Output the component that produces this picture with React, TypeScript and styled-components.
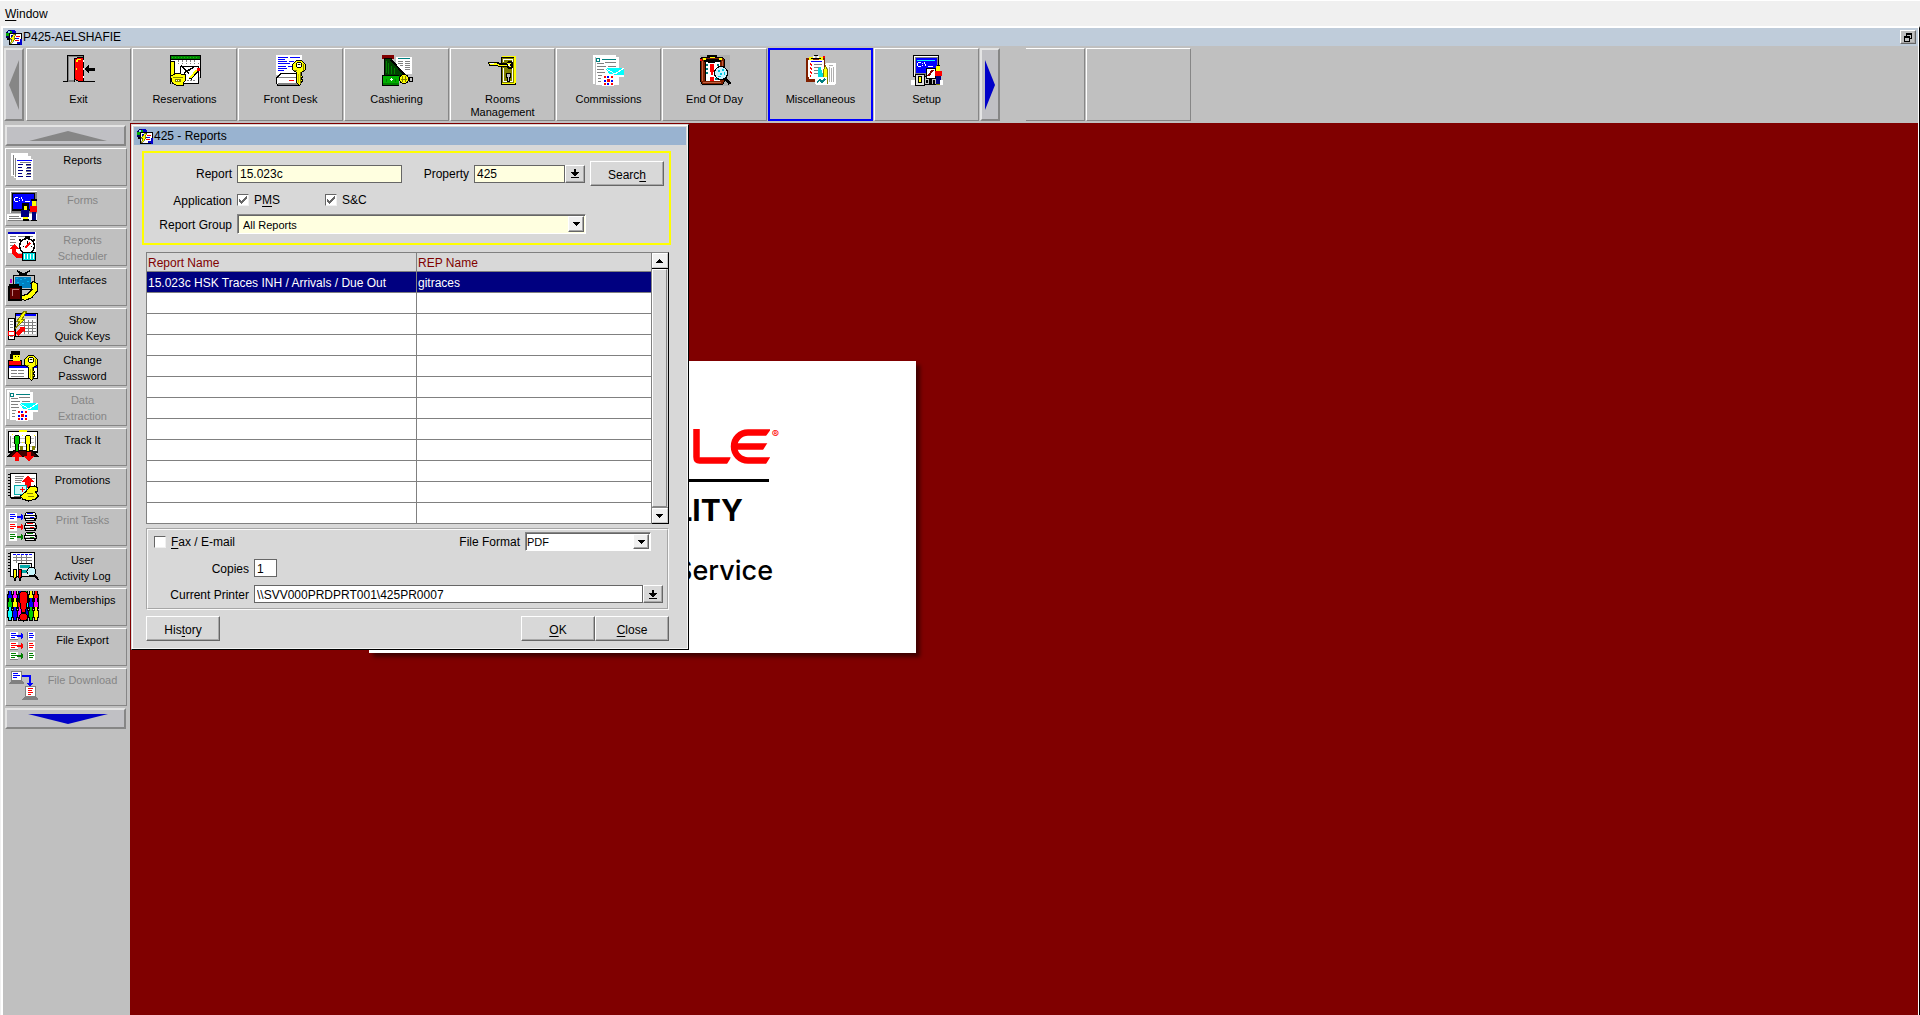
import React from "react";
import styled, { createGlobalStyle, css } from "styled-components";

const color = {
  face: "#c0c0c0",
  panel: "#d8d8d8",
  shade: "#868686",
  edge: "#666666",
  maroon: "#800000",
  navy: "#000080",
  cream: "#ffffe0",
};

const GlobalStyle = createGlobalStyle`
  *, *::before, *::after { box-sizing: border-box; }
  body { margin: 0; background: #f0f0f0; }
  body, button, input, select, table {
    font-family: "Liberation Sans", Arial, sans-serif;
    font-size: 12px;
    color: #000;
  }
  u { text-underline-offset: 2px; }
`;

const raised = css`
  border: 1px solid;
  border-color: #fff ${color.edge} ${color.edge} #fff;
  box-shadow: inset -1px -1px 0 #a8a8a8;
`;

/* ---------- pixel drawings ---------- */

// Each "x,y,w,h" group becomes one filled block.
function Px({ c, r }: { c: string; r: string }) {
  const d = r
    .split(" ")
    .map((b) => {
      const [x, y, w, h] = b.split(",");
      return `M${x} ${y}h${w}v${h}h-${w}z`;
    })
    .join("");
  return <path fill={c} d={d} />;
}

const Art = styled.svg.attrs({ shapeRendering: "crispEdges", "aria-hidden": true })<{ $size?: number }>`
  display: block;
  flex: none;
  width: ${(p) => p.$size ?? 32}px;
  height: ${(p) => p.$size ?? 32}px;
`;

const Icon = ({ children }: { children: React.ReactNode }) => <Art viewBox="0 0 32 32">{children}</Art>;

const KeyShape = () => (
  <g>
    <path
      fill="#ff0"
      stroke="#000"
      strokeWidth="1"
      d="M21.500 5.500h5l4 4v5l-4 3v3l1 1-1 2 1 2-1 2-2 3-3-3v-10l-4-3v-5z"
    />
    <Px c="#808000" r="25,17,1,12 28,9,1,7 19,15,3,1" />
    <Px c="#000" r="22,7,4,1 21,8,1,4 26,8,1,4 22,12,4,1 23,9,2,1" />
    <Px c="#fff" r="22,10,4,2 22,8,4,1" />
    <Px c="#c0c000" r="23,19,1,9" />
  </g>
);

const ExitIcon = () => (
  <Icon>
    <Px c="#808080" r="5,1,1,26 6,1,15,1 6,25,6,2" />
    <Px c="#000" r="4,0,1,27 4,0,17,1 0,26,5,1 20,26,12,1 11,3,1,24 20,1,1,4" />
    <path fill="#f00" stroke="#000" strokeWidth="1" d="M11.5 4l4-1.5h5v24h-4l-5-2z" />
    <Px c="#ff0" r="14,4,4,1 13,5,2,2 13,13,1,2" />
    <Px c="#fff" r="20,5,1,2 20,13,1,2 20,21,1,2" />
    <path d="M21 14l5-4v3h6v3h-6v3z" />
  </Icon>
);

const ReservationsIcon = () => (
  <Icon>
    <Px c="#000" r="1,0,31,5 1,5,1,24 31,5,1,18 12,28,18,1" />
    <Px c="#008000" r="2,1,29,3" />
    <Px c="#00d000" r="3,2,1,1 6,2,1,1 9,2,1,1 12,2,1,1 15,2,1,1 18,2,1,1 21,2,1,1 24,2,1,1 27,2,1,1" />
    <Px c="#fff" r="2,5,29,17" />
    <Px c="#808080" r="9,8,1,1 13,8,1,1 17,8,1,1 21,8,1,1 25,8,1,1 29,8,1,1 9,5,1,2 13,5,1,2 17,5,1,2 21,5,1,2 25,5,1,2" />
    <Px c="#000" r="11,11,19,1 11,11,1,8 29,11,1,17" />
    <Px c="#fff" r="12,12,17,16" />
    <Px c="#808080" r="18,25,2,1 21,25,2,1 24,25,2,1 14,13,2,1 22,13,2,1" />
    <path d="M12 11l8 7M15 18l10-6" stroke="#000" strokeWidth="1.5" fill="none" />
    <path d="M21 24l7-8" stroke="#000" strokeWidth="3" />
    <path d="M21 23l7-8" stroke="#ff0" strokeWidth="2" />
    <Px c="#f00" r="28,13,3,3" />
    <path fill="#ff0" stroke="#000" d="M1.5 6.5h4v13l-2 2-2-2z" />
    <path fill="#ff0" stroke="#000" d="M1.5 21.5l5-3 10 1v6l-2 2v3h-6l-5-2z" />
    <Px c="#808000" r="4,22,10,1 6,24,6,3" />
    <Px c="#fff" r="7,25,1,1 9,25,1,1" />
  </Icon>
);

const FrontDeskIcon = () => (
  <Icon>
    <Px c="#fff" r="1,0,26,20" />
    <Px c="#00f" r="3,2,10,1 15,2,10,1 3,4,7,1 3,6,9,1 3,8,12,1 3,11,8,1 3,13,9,1 3,15,6,1 14,6,5,1 13,11,5,1" />
    <path fill="#fff" stroke="#000" d="M6 18.500h15l4 4v5l-2 3h-20l-2-3v-4z" />
    <Px c="#808080" r="3,22,20,1 3,28,20,2" />
    <Px c="#f00" r="14,25,5,1" />
    <KeyShape />
  </Icon>
);

const CashieringIcon = () => (
  <Icon>
    <Px c="#fff" r="15,2,16,17" />
    <Px c="#008080" r="17,3,12,1" />
    <Px c="#808080" r="17,6,5,1 17,8,5,1 24,6,5,1 24,8,5,1 24,10,5,1 24,12,5,1 24,14,5,1 19,10,3,1" />
    <Px c="#800000" r="1,0,12,4" />
    <Px c="#000" r="3,3,8,17" />
    <path fill="#004000" d="M4 4h6l12 13v5h-18z" />
    <path d="M10 5l13 14" stroke="#000" strokeWidth="2" />
    <Px c="#008000" r="5,6,1,12 7,8,1,11 10,11,1,8 13,13,1,6" />
    <Px c="#000" r="1,20,17,11" />
    <Px c="#00b000" r="2,21,16,8" />
    <Px c="#008000" r="2,28,16,2 5,24,1,3 14,24,1,3" />
    <Px c="#fff" r="9,24,3,1 10,23,1,3" />
    <circle cx="23" cy="24" r="4.500" fill="#ff0" stroke="#000" />
    <Px c="#808000" r="21,21,1,6 24,21,1,6 20,24,6,1" />
    <path fill="#c0c0c0" stroke="#000" d="M28 22.500h3v4h-3z" />
  </Icon>
);

const RoomsIcon = () => (
  <Icon>
    <Px c="#000" r="14,2,15,28" />
    <Px c="#808000" r="15,3,12,26" />
    <Px c="#ff0" r="15,1,14,1 27,2,2,26 15,28,13,1" />
    <Px c="#fff" r="16,4,10,1 25,5,1,21 16,26,10,1 16,4,1,3 16,13,1,13" />
    <path fill="#000" d="M1 7h9l3 1h7l1-2h3l2 2v4l-2 2h-3l-2-2h-7l-3-1h-7z" />
    <Px c="#ff0" r="2,8,8,1 3,9,9,1 11,10,9,1 20,8,4,1 22,11,2,1" />
    <Px c="#fff" r="3,8,4,1 21,9,2,2" />
    <Px c="#000" r="19,18,5,5 20,22,3,5" />
    <Px c="#c0c0c0" r="20,19,3,3 21,22,1,4" />
  </Icon>
);

const MailReportIcon = () => (
  <Icon>
    <Px c="#fff" r="0,0,23,2 0,0,2,29 3,2,23,28" />
    <Px c="#008080" r="3,3,1,4 6,3,1,4 3,3,4,1 3,6,4,1 9,4,14,1" />
    <Px c="#808080" r="12,7,11,1 4,8,7,1 4,11,9,1 15,11,8,1 4,14,7,1 4,17,8,1 5,20,4,1 5,23,3,1 5,26,3,1" />
    <path fill="#0ff" d="M12 13h19v8h-13z" />
    <path d="M12 13l10 6 9-6" stroke="#fff" fill="none" />
    <Px c="#fff" r="20,20,11,2 9,19,12,12" />
    <Px c="#f00" r="11,21,2,2 18,21,2,2 14,24,3,3 11,28,2,2 18,28,2,2" />
    <Px c="#00f" r="14,21,2,2 11,25,2,2 18,25,2,2 14,28,2,2" />
  </Icon>
);

const EndOfDayIcon = () => (
  <Icon>
    <Px c="#b0b0b0" r="1,0,30,31" />
    <path fill="#802000" stroke="#000" d="M2.500 2.500h21l2 2v22l-2 3h-20l-2-3v-22z" />
    <Px c="#c06040" r="3,6,1,20 4,27,18,1 23,6,1,6" />
    <Px c="#000" r="8,0,10,3 5,4,17,3" />
    <Px c="#ff0" r="4,3,3,2 20,3,3,2 11,2,5,1" />
    <Px c="#f00" r="1,4,2,2" />
    <Px c="#fff" r="6,7,15,19" />
    <Px c="#000" r="6,7,1,19 9,7,7,1" />
    <Px c="#008080" r="7,9,2,2 7,13,2,2 7,17,2,2 18,9,2,2 16,23,4,2" />
    <Px c="#f00" r="11,9,4,8 12,17,2,3 11,22,4,4" />
    <circle cx="22" cy="18" r="6.500" fill="#c8f4ff" stroke="#000" />
    <Px c="#00c8e0" r="19,15,2,2 23,14,2,2 21,18,2,2 25,17,1,3 19,21,3,1" />
    <path d="M26 23l5 6" stroke="#000" strokeWidth="3" />
  </Icon>
);

const MiscIcon = () => (
  <Icon>
    <path fill="#fff" stroke="#802000" strokeWidth="2" d="M2 4h17v22h-17z" />
    <Px c="#802000" r="1,22,10,4" />
    <Px c="#ff0" r="4,2,4,3 14,2,4,3" />
    <Px c="#fff" r="4,5,15,19 8,1,2,3 12,1,2,3" />
    <Px c="#000" r="9,0,4,1 6,3,10,1" />
    <Px c="#00f" r="6,6,11,1" />
    <Px c="#808080" r="9,9,8,1 9,12,7,1 9,15,6,1 9,18,4,1" />
    <Px c="#f00" r="5,8,1,2 6,9,1,2 5,12,1,2 6,13,1,2 5,16,1,2 6,17,1,2 5,20,1,2 18,1,2,2" />
    <path fill="#fff" d="M20 9l2-1h8l1 1v19l-2 2h-8z" />
    <Px c="#b0b0b0" r="22,13,1,14 24,12,1,15 26,13,1,14 28,12,1,15 24,10,4,1" />
    <path fill="#0dd" d="M13 13l2-2 3 8v5h-5z" />
    <path fill="#ff0" stroke="#808000" d="M18.500 15l2-4 2 4v13h-4z" />
    <path fill="#fff" d="M10 22h12v7l-1 1h-10l-1-1z" />
    <path fill="none" stroke="#008080" strokeWidth="1.500" d="M12 27l3-2 2 2 3-3" />
  </Icon>
);

const SetupIcon = () => (
  <Icon>
    <Px c="#000" r="2,0,26,22" />
    <Px c="#fff" r="3,1,24,20" />
    <Px c="#808080" r="4,2,23,19" />
    <Px c="#00f" r="5,3,21,15" />
    <Px c="#0ff" r="6,5,18,1" />
    <Px c="#fff" r="7,7,3,1 6,8,1,3 7,11,3,1 11,8,1,1 11,10,1,1 13,7,1,2 14,9,1,2 17,11,5,1" />
    <path fill="#fff" stroke="#000" d="M15.500 13.500h9v10h-9z" />
    <path d="M17 21l5-6" stroke="#800000" strokeWidth="2" />
    <Px c="#ff0" r="25,11,4,5" />
    <Px c="#f00" r="24,16,7,5" />
    <Px c="#000080" r="25,21,5,8" />
    <Px c="#000" r="26,10,3,1 15,25,2,3 18,24,3,5 22,25,2,5 13,29,13,1" />
    <Px c="#808000" r="25,29,5,1" />
    <path fill="#e0e0e0" stroke="#000" d="M4.500 19.500h9v11h-9z" />
    <Px c="#000" r="7,21,4,7" />
    <Px c="#ff0" r="8,22,2,5" />
    <Px c="#fff" r="0,25,4,5 29,25,3,5" />
  </Icon>
);

const ReportsIcon = () => (
  <Icon>
    <Px c="#fff" r="4,3,17,23" />
    <Px c="#808080" r="6,5,1,20" />
    <Px c="#fff" r="7,6,17,22" />
    <Px c="#808080" r="8,8,1,19" />
    <Px c="#fff" r="9,9,17,21" />
    <Px c="#00f" r="10,10,15,1" />
    <Px c="#000080" r="11,14,5,1 11,17,4,1 11,20,5,1 11,23,4,1 11,26,5,1 19,14,5,1 20,17,4,1 19,20,5,1 20,23,4,1 19,26,5,1" />
    <Px c="#808080" r="13,12,11,1 19,15,5,1 19,18,5,1 19,21,5,1 19,24,5,1" />
  </Icon>
);

const FormsIcon = () => (
  <Icon>
    <Px c="#fff" r="3,1,27,22" />
    <Px c="#808080" r="4,2,26,21" />
    <Px c="#000" r="5,3,23,18" />
    <Px c="#00f" r="6,4,21,15" />
    <Px c="#fff" r="8,7,3,1 7,8,1,3 8,11,3,1 12,8,1,1 12,10,1,1 14,7,1,2 15,9,1,2 18,11,5,1" />
    <Px c="#fff" r="0,24,30,6" />
    <Px c="#808080" r="2,26,10,1 2,28,12,1 1,30,29,1" />
    <Px c="#000" r="15,13,7,8" />
    <Px c="#ff0" r="17,16,3,4 25,11,4,5 16,26,5,3" />
    <Px c="#000080" r="14,20,8,7 25,22,4,8" />
    <Px c="#f00" r="23,16,7,6" />
    <Px c="#000" r="24,9,6,2 16,29,6,2 24,30,6,1" />
  </Icon>
);

const SchedulerIcon = () => (
  <Icon>
    <Px c="#fff" r="1,2,28,21" />
    <Px c="#0000c0" r="1,2,27,2" />
    <Px c="#808080" r="3,6,6,1 11,6,7,1 20,6,6,1 3,9,5,1 3,12,6,1 3,15,4,1 3,18,5,1" />
    <circle cx="20" cy="16" r="7.500" fill="#fff" stroke="#000" strokeWidth="1.500" />
    <Px c="#000" r="18,6,5,2 19,8,2,1 12,9,2,2 26,9,2,2 20,11,1,5 16,16,1,1 24,16,1,1" />
    <path d="M18 18l5-5" stroke="#f00" strokeWidth="1.500" />
    <path d="M7 14l5 5h-3v3l2 2h5v4h-6l-5-4v-5h-3z" fill="#f00" />
    <path fill="#0dd" stroke="#000" d="M15.500 22.500h13v8h-13z" />
    <Px c="#fff" r="17,24,1,5 20,24,1,5 23,24,1,5 26,24,1,5" />
  </Icon>
);

const InterfacesIcon = () => (
  <Icon>
    <path d="M10 1l6 3 7-3M12 4h8" stroke="#000" strokeWidth="1.500" fill="none" />
    <path fill="#c0c0c0" stroke="#000" d="M6.500 5.500h21v14h-21z" />
    <Px c="#0080c0" r="8,7,16,11" />
    <Px c="#00b0f0" r="9,8,2,1 13,9,2,1 17,8,2,1 10,12,2,1 15,13,2,1 20,11,2,1" />
    <Px c="#c000c0" r="3,9,2,4" />
    <path fill="#600000" stroke="#000" strokeWidth="1.500" d="M2 17h12v13h-12z" />
    <Px c="#000" r="2,14,10,3" />
    <Px c="#c08080" r="5,19,7,1 5,19,1,7" />
    <path fill="#ff0" stroke="#000" d="M26 11.500l4 2v8l-5 6-7 3-4-2 1-3 5-1 5-5-1-6z" />
  </Icon>
);

const QuickKeysIcon = () => (
  <Icon>
    <path fill="#d0d0d0" stroke="#000" d="M8.500 3.500h22v23h-22z" />
    <Px c="#00f" r="9,4,20,2" />
    <Px c="#fff" r="13,9,16,15" />
    <Px c="#808080" r="13,12,16,1 13,15,16,1 13,18,16,1 13,21,16,1 17,10,1,14 21,10,1,14 25,10,1,14" />
    <path fill="#fff" stroke="#000" d="M1.500 8.500h6v21h-6z" />
    <Px c="#808080" r="3,11,3,1 3,14,3,1 3,17,3,1 3,26,3,1" />
    <path d="M1 21h6v4h-6z" fill="#fff" stroke="#f00" />
    <path fill="#f00" d="M9 23l4-5-1-1h6v5l-2-1-5 5z" />
    <path fill="#ff0" stroke="#808000" d="M17 1l-7 10h3l-5 8 10-10h-3l5-8z" />
  </Icon>
);

const PasswordIcon = () => (
  <Icon>
    <Px c="#000" r="4,1,9,4 3,4,3,5 1,10,14,7" />
    <Px c="#ff0" r="6,5,7,6" />
    <Px c="#000" r="8,6,1,1 11,6,1,1" />
    <Px c="#f00" r="2,11,12,5" />
    <Px c="#000" r="1,15,30,14" />
    <Px c="#fff" r="2,17,28,11" />
    <Px c="#00f" r="2,16,28,2" />
    <Px c="#808080" r="4,20,6,1 11,20,6,1 4,23,6,1 11,23,6,1 4,26,13,1" />
    <KeyShape />
  </Icon>
);

const TrackItIcon = () => (
  <Icon>
    <Px c="#000" r="1,1,30,22" />
    <Px c="#fff" r="2,2,28,19" />
    <Px c="#c0c0c0" r="5,8,22,1 5,12,22,1 5,16,22,1" />
    <Px c="#808080" r="3,6,1,12 28,6,1,12" />
    <Px c="#ff0" r="12,0,8,2 5,4,1,1 15,5,1,1 15,12,1,1 27,5,1,1" />
    <path fill="#400000" stroke="#000" d="M1 26.500l6-6h18l6 6z" />
    <path fill="#00c800" stroke="#000" d="M8.500 5h3l1 2v6l-1 2v6h-3v-6l-1-2v-6z" />
    <path fill="#ff0" stroke="#000" d="M19.500 5h3l1 2v6l-1 2v6h-3v-6l-1-2v-6z" />
    <Px c="#808000" r="13,16,3,4 25,16,3,4" />
    <path fill="#f00" d="M10 22l6 5h-4v4h-4v-4h-4zM20 22h4v4h4l-6 5-6-5h4z" />
  </Icon>
);

const PromotionsIcon = () => (
  <Icon>
    <path fill="#fff" stroke="#000" d="M3.500 3.500h26v24h-26z" />
    <Px c="#000" r="1,4,3,1 1,7,3,1 1,10,3,1 1,13,3,1 1,16,3,1 1,19,3,1 1,22,3,1 1,25,3,1 4,28,10,1" />
    <Px c="#808080" r="8,6,9,1 8,8,8,1 8,10,7,1 23,8,5,1 8,12,6,1 7,26,7,1" />
    <path fill="#f00" d="M21 5l6 7h-3v6h-6v-6h-3z" />
    <path fill="#c8f8f8" stroke="#0aa" d="M7.500 15.500h12v9h-12z" />
    <Px c="#f00" r="13,19,5,1 15,17,1,5" />
    <path fill="#ff0" stroke="#000" d="M13.500 26l5-4 4-5 5-1 3 2v3l-2 1 3 4-3 3-7 2-6-2z" />
    <Px c="#808000" r="20,23,6,1 21,26,6,1" />
  </Icon>
);

const lanes = [
  ["#00f", 3],
  ["#f00", 13],
  ["#008000", 23],
] as const;

const PrintTasksIcon = () => (
  <Icon>
    {lanes.map(([c, y]) => (
      <g key={c} transform={`translate(0 ${y})`}>
        <Px c="#fff" r="2,0,8,8" />
        <Px c={c} r="3,1,5,1 3,3,6,1 3,5,4,1 10,3,5,2 14,1,1,6 15,2,1,4" />
        <Px c="#000" r="19,-1,9,1 18,0,1,2 28,0,1,2 17,2,13,4 18,6,11,2" />
        <Px c="#fff" r="19,0,9,2 18,3,10,1 19,6,8,1" />
        <Px c="#c0c0c0" r="18,4,11,1" />
        <Px c={c} r="23,4,4,1 20,0,6,1" />
      </g>
    ))}
  </Icon>
);

const FileExportIcon = () => (
  <Icon>
    {lanes.map(([c, y]) => (
      <g key={c} transform={`translate(0 ${y - 1})`}>
        <Px c="#fff" r="3,0,8,8 20,0,8,8" />
        <Px c="#808080" r="20,0,1,8 3,7,8,1" />
        <Px c={c} r="4,1,5,1 4,3,6,1 4,5,4,1 10,3,5,2 14,1,1,6 15,2,1,4 22,1,4,1 22,3,5,1 22,5,4,1" />
      </g>
    ))}
  </Icon>
);

const FileDownloadIcon = () => (
  <Icon>
    <path fill="#808080" d="M2 13l4-3h8l3 3v1h-15zM15 29l4-3h9l3 3v1h-16z" />
    <Px c="#808080" r="4,1,11,10 18,16,11,11" />
    <Px c="#fff" r="5,2,9,8 19,17,9,9" />
    <Px c="#00f" r="6,3,5,1 6,5,7,1 6,7,4,1 15,5,9,2 22,5,2,9 20,13,6,1 21,14,4,1 22,15,2,1" />
    <Px c="#f00" r="21,18,5,1 21,20,4,1 21,22,5,1 21,24,3,1" />
  </Icon>
);

const ActivityLogIcon = () => (
  <Icon>
    <path fill="#fff" stroke="#000" d="M3.500 2.500h24v24h-24z" />
    <Px c="#000" r="1,3,3,1 1,6,3,1 1,9,3,1 1,12,3,1 1,15,3,1 1,18,3,1 1,21,3,1" />
    <Px c="#00f" r="6,4,3,1 10,4,3,1 14,4,3,1 18,4,3,1 22,4,3,1" />
    <Px c="#808080" r="6,7,19,1 6,10,19,1 9,5,1,8 14,5,1,8 19,5,1,8" />
    <path fill="#e8e8e8" stroke="#000" d="M11.500 13.500h13v13h-13z" />
    <Px c="#0aa" r="13,15,10,3 14,20,6,3" />
    <circle cx="24.500" cy="21.500" r="4.500" fill="#c8f8ff" stroke="#000" />
    <path d="M28 25l3 5" stroke="#000" strokeWidth="2" />
    <path fill="#ff0" stroke="#000" d="M6.500 20l1-1h1l1 1v5l-1 5h-1l-1-5z" />
    <path fill="#f00" stroke="#000" d="M11.500 20l1-1h1l1 1v5l-1 5h-1l-1-5z" />
  </Icon>
);

const crowd = ["#00f", "#f00", "#0c0", "#f0f", "#0ff", "#ff0", "#00c"];

const MembershipsIcon = () => (
  <Icon>
    {[1, 8, 17].map((y, row) =>
      [1, 6, 11, 17, 22, 27].map((x, i) => (
        <g key={`${x}-${y}`}>
          <Px c="#000" r={`${x},${y},4,4 ${x - 1},${y + 3},6,8 ${x},${y + 10},4,4`} />
          <Px
            c={crowd[(i * 3 + row * 2) % 7]}
            r={`${x + 1},${y},2,4 ${x},${y + 4},4,6 ${x + 1},${y + 10},2,3`}
          />
        </g>
      ))
    )}
    <path fill="#f00" stroke="#000" d="M12.500 4l2-3h4l2 3v6l-2 12h-4l-2-12z" />
    <circle cx="16.500" cy="27" r="4" fill="#f00" stroke="#000" />
  </Icon>
);

const AppMark = () => (
  <Art $size={17} viewBox="0 0 17 17">
    <circle cx="6" cy="6" r="5.500" fill="#000060" />
    <Px c="#00c" r="6,1,4,3 9,2,2,3" />
    <Px c="#0a0" r="1,4,3,3 4,2,3,3" />
    <Px c="#8cf" r="3,2,2,2" />
    <Px c="#000" r="2,9,3,2 5,4,12,1 4,4,1,12 4,15,12,1 16,5,1,5" />
    <Px c="#fff" r="5,5,11,10" />
    <Px c="#00c" r="15,10,2,6 12,13,4,2 6,6,4,2" />
    <Px c="#f00" r="11,7,4,1 10,11,4,1" />
    <Px c="#00f" r="10,9,4,1" />
    <path fill="#ff0" stroke="#000" strokeWidth=".5" d="M9 5l-4 5h2l-2 6 6-7h-2l2-4z" />
  </Art>
);

const Glyph = styled.svg.attrs({ "aria-hidden": true })<{ $w: number; $h: number }>`
  display: block;
  flex: none;
  width: ${(p) => p.$w}px;
  height: ${(p) => p.$h}px;
`;

const Caret = ({ up = false }: { up?: boolean }) => (
  <Glyph $w={7} $h={4} viewBox="0 0 7 4" shapeRendering="crispEdges">
    {up ? <Px c="#000" r="3,0,1,1 2,1,3,1 1,2,5,1 0,3,7,1" /> : <Px c="#000" r="0,0,7,1 1,1,5,1 2,2,3,1 3,3,1,1" />}
  </Glyph>
);

const ListArrow = () => (
  <Glyph $w={8} $h={9} viewBox="0 0 8 9" shapeRendering="crispEdges">
    <Px c="#000" r="3,0,2,3 0,3,8,1 1,4,6,1 2,5,4,1 3,6,2,1 0,8,8,1" />
  </Glyph>
);

/* ---------- application frame ---------- */

const Screen = styled.div`
  display: flex;
  flex-direction: column;
  min-height: 100vh;
  background: #f0f0f0;
`;

const MenuBar = styled.nav`
  display: flex;
  align-items: center;
  height: 26px;
  padding-left: 5px;
  border-top: 1px solid #fff;
`;

const MenuItem = styled.button`
  border: 0;
  padding: 0;
  background: none;
`;

const Frame = styled.div`
  flex: 1;
  display: flex;
  flex-direction: column;
  margin-left: 1px;
  border: 2px solid #fff;
  border-right: 1px solid #000;
  border-bottom: 0;
`;

const FrameInner = styled.div`
  flex: 1;
  display: flex;
  flex-direction: column;
  border-right: 1px solid #fff;
`;

const TitleBar = styled.header<{ $active?: boolean }>`
  display: flex;
  align-items: center;
  height: 18px;
  padding: 0 2px;
  gap: 1px;
  background: ${(p) => (p.$active ? "#99b3d0" : "#bfccda")};
`;

const TitleText = styled.span`
  flex: 1;
  padding-top: 1px;
  line-height: 17px;
`;

const RestoreButton = styled.button`
  ${raised}
  display: grid;
  place-items: center;
  width: 16px;
  height: 14px;
  padding: 0;
  background: ${color.face};
`;

const ToolBar = styled.nav`
  display: flex;
  gap: 1px;
  height: 77px;
  padding: 2px 0 2px 1px;
  background: ${color.face};
`;

const tile = css`
  border: 1px solid;
  border-color: #fff ${color.shade} ${color.shade} #fff;
  background: ${color.face};
`;

const Tool = styled.button<{ $selected?: boolean }>`
  ${tile}
  ${(p) => p.$selected && "border: 2px solid #00f;"}
  display: flex;
  flex-direction: column;
  align-items: center;
  gap: 6px;
  width: 105px;
  padding: ${(p) => (p.$selected ? 5 : 6)}px 12px 0;
  font-size: 11px;
  line-height: 13px;
`;

const BlankTile = styled.div<{ $cut?: boolean }>`
  ${tile}
  width: ${(p) => (p.$cut ? 59 : 105)}px;
  ${(p) => p.$cut && "border-left: 0; margin-left: 24px;"}
`;

const Pager = styled.button<{ $side?: boolean }>`
  display: grid;
  place-items: center;
  padding: 0;
  border: 2px solid;
  border-color: #e4e4e4 ${color.shade} ${color.shade} #e4e4e4;
  background: #c0c0c4;
  ${(p) => (p.$side ? "height: 21px; margin-right: 1px; padding-left: 4px;" : "width: 20px; margin-right: 1px;")}
`;

const Workspace = styled.div`
  flex: 1;
  display: flex;
`;

const SideBar = styled.nav`
  display: flex;
  flex-direction: column;
  gap: 2px;
  width: 127px;
  padding: 2px 3px 0 2px;
  background: ${color.face};
`;

const SideItem = styled.button`
  ${tile}
  display: grid;
  grid-template-columns: 32px 1fr;
  align-items: start;
  height: 38px;
  padding: 1px 0 0 1px;
  font-size: 11px;
  line-height: 16px;
  &:disabled { color: ${color.shade}; }
`;

const SideLabel = styled.span`
  padding-top: 2px;
  text-align: center;
  white-space: pre-line;
`;

const Desktop = styled.main`
  position: relative;
  flex: 1;
  overflow: hidden;
  background: ${color.maroon};
`;

/* ---------- splash card ---------- */

const Splash = styled.section`
  position: absolute;
  left: 239px;
  top: 238px;
  display: flex;
  flex-direction: column;
  width: 547px;
  height: 292px;
  padding: 68px 137px 0 140px;
  background: #fff;
  box-shadow: 4px 4px 4px rgba(0, 0, 0, 0.5);
  font-family: Inter, Roboto, sans-serif;
  font-size: 27px;
  line-height: 34px;
`;

const BrandRow = styled.div`
  display: flex;
  justify-content: flex-end;
  align-items: flex-start;
  gap: 2px;
  height: 36px;
`;

const Registered = styled.span`
  font-size: 11px;
  font-weight: 500;
  line-height: 10px;
  color: #f00;
`;

const Rule = styled.hr`
  width: 230px;
  height: 3px;
  margin: 14px 10px 0 auto;
  border: 0;
  background: #000;
`;

const Division = styled.strong`
  align-self: flex-end;
  margin: 11px 36px 0 0;
  font-size: 30px;
`;

const Offer = styled.span`
  align-self: flex-end;
  margin: 27px 6px 0 0;
  font-weight: 500;
`;

const BrandMark = () => (
  <Glyph $w={77} $h={35} viewBox="0 0 77 35" role="img">
    <g fill="none" stroke="#f00" strokeWidth="6.500">
      <path d="M3.500 0v28q0 3.500 3 3.500h31" />
      <path d="M77 3.500h-22a14 14 0 0 0 0 28h22M40 17.500h35" />
    </g>
    <path fill="#fff" d="M39 27l-5 8h5zM78 0l-5 7h5zM78 13h-3l-5 8h8zM78 27l-5 8h5z" />
  </Glyph>
);

/* ---------- reports window ---------- */

const Dialog = styled.section`
  position: absolute;
  left: 1px;
  top: 1px;
  width: 558px;
  padding: 2px;
  border: 1px solid;
  border-color: ${color.panel} #000 #000 ${color.panel};
  box-shadow: inset 1px 1px 0 #fff, inset -1px -1px 0 #f4f4f4;
  background: ${color.panel};
`;

const DialogBody = styled.form`
  display: flex;
  flex-direction: column;
  padding: 6px 15px 6px 8px;
`;

const Criteria = styled.div`
  display: flex;
  flex-direction: column;
  gap: 7px;
  padding: 8px 5px 9px 0;
  border: 2px solid #ff0;
`;

const Row = styled.div<{ $h: number }>`
  display: flex;
  align-items: center;
  gap: 5px;
  height: ${(p) => p.$h}px;
`;

const Label = styled.label<{ $w?: number }>`
  flex: none;
  width: ${(p) => (p.$w ? `${p.$w}px` : "auto")};
  padding-top: 1px;
  text-align: right;
  white-space: nowrap;
`;

const TextBox = styled.input<{ $w?: number; $cream?: boolean }>`
  flex: ${(p) => (p.$w ? "none" : 1)};
  width: ${(p) => (p.$w ? `${p.$w}px` : "auto")};
  min-width: 0;
  height: 18px;
  padding: 1px 2px 0;
  border: 1px solid ${color.edge};
  border-radius: 0;
  background: ${(p) => (p.$cream ? color.cream : "#fff")};
`;

const Lookup = styled.div<{ $w?: number }>`
  display: flex;
  flex: ${(p) => (p.$w ? "none" : 1)};
  width: ${(p) => (p.$w ? `${p.$w}px` : "auto")};
`;

const LookupButton = styled.button`
  ${raised}
  display: grid;
  place-items: center;
  width: 20px;
  height: 18px;
  padding: 0;
  background: ${color.panel};
`;

const Command = styled.button`
  ${raised}
  width: 74px;
  height: 25px;
  padding: 2px 0 0;
  background: ${color.panel};
`;

const CheckLabel = styled.label<{ $w?: number }>`
  display: flex;
  align-items: center;
  gap: 5px;
  width: ${(p) => (p.$w ? `${p.$w}px` : "auto")};
`;

const CheckCell = styled.span`
  display: grid;
  place-items: center;
  > * { grid-area: 1 / 1; }
  > svg { pointer-events: none; visibility: hidden; }
  > input:checked + svg { visibility: visible; }
`;

const CheckInput = styled.input.attrs({ type: "checkbox" })`
  appearance: none;
  width: 12px;
  height: 12px;
  margin: 0;
  border: 1px solid;
  border-color: ${color.edge} #f0f0f0 #f0f0f0 ${color.edge};
  background: #fff;
`;

function Check({ children, $w, on }: { children: React.ReactNode; $w?: number; on?: boolean }) {
  return (
    <CheckLabel $w={$w}>
      <CheckCell>
        <CheckInput defaultChecked={on} />
        <Glyph $w={8} $h={8} viewBox="0 0 8 8" shapeRendering="crispEdges">
          <Px c="#666" r="0,3,1,3 1,4,1,3 2,5,1,3 3,4,1,3 4,3,1,3 5,2,1,3 6,1,1,3 7,0,1,3" />
        </Glyph>
      </CheckCell>
      <span>{children}</span>
    </CheckLabel>
  );
}

const Combo = styled.div<{ $w: number; $h: number; $cream?: boolean }>`
  position: relative;
  width: ${(p) => p.$w}px;
  height: ${(p) => p.$h}px;
  border: 1px solid;
  border-color: ${color.shade} #fff #fff ${color.shade};
  box-shadow: inset 1px 1px 0 ${color.edge};
  background: ${(p) => (p.$cream ? color.cream : "#fff")};
`;

const ComboSelect = styled.select<{ $inset: number }>`
  appearance: none;
  width: 100%;
  height: 100%;
  padding: 1px 18px 0 ${(p) => p.$inset}px;
  border: 0;
  background: transparent;
  font-size: 11px;
`;

const ComboArrow = styled.span`
  ${raised}
  position: absolute;
  top: 1px;
  right: 1px;
  bottom: 1px;
  display: grid;
  place-items: center;
  width: 16px;
  background: #f0f0f0;
  pointer-events: none;
`;

const Indented = styled.div`
  display: flex;
  flex-direction: column;
  margin: 7px 2px 0 4px;
`;

const Results = styled.div`
  display: flex;
`;

const Grid = styled.table`
  flex: 1;
  border-collapse: collapse;
  table-layout: fixed;
  background: #fff;
  th, td {
    height: 21px;
    padding: 1px 1px 0;
    border: 1px solid #808080;
    text-align: left;
    font-weight: normal;
    white-space: nowrap;
  }
  th {
    height: 19px;
    background: ${color.panel};
    color: ${color.maroon};
  }
`;

const NameColumn = styled.col`
  width: 270px;
`;

const ResultRow = styled.tr<{ $selected?: boolean }>`
  ${(p) => p.$selected && `background: ${color.navy}; color: #fff;`}
`;

const ScrollBar = styled.div`
  display: flex;
  flex-direction: column;
  width: 17px;
  border: 1px solid;
  border-color: ${color.shade} #000 #000 ${color.shade};
  border-left: 0;
`;

const ScrollButton = styled.button<{ $down?: boolean }>`
  display: grid;
  place-items: center;
  height: 15px;
  padding: 0 1px 0 0;
  border: 1px solid;
  border-color: #fff #c8c8c8 #c8c8c8 #fff;
  background: #f0f0f0;
  box-shadow: 0 ${(p) => (p.$down ? "-1px" : "1px")} 0 ${(p) => (p.$down ? color.shade : "#000")};
`;

const ScrollTrack = styled.div`
  flex: 1;
  margin: 1px 1px 1px 0;
  border: 1px solid;
  border-color: #fff ${color.shade} ${color.shade} #fff;
  background: ${color.panel};
`;

const Output = styled.div`
  display: flex;
  flex-direction: column;
  gap: 8px;
  margin-top: 4px;
  padding: 2px 4px 5px 0;
  border: 2px groove #fafafa;
`;

const Between = styled.div`
  display: flex;
  align-items: center;
  justify-content: space-between;
  padding: 0 12px 0 6px;
`;

const Commands = styled.div`
  display: flex;
  margin-top: 6px;
`;

const Filler = styled.span`
  flex: 1;
`;

/* ---------- content ---------- */

const tools = [
  { name: "Exit", icon: ExitIcon },
  { name: "Reservations", icon: ReservationsIcon },
  { name: "Front Desk", icon: FrontDeskIcon },
  { name: "Cashiering", icon: CashieringIcon },
  { name: "Rooms Management", icon: RoomsIcon },
  { name: "Commissions", icon: MailReportIcon },
  { name: "End Of Day", icon: EndOfDayIcon },
  { name: "Miscellaneous", icon: MiscIcon, selected: true },
  { name: "Setup", icon: SetupIcon },
];

const sideItems = [
  { name: "Reports", icon: ReportsIcon },
  { name: "Forms", icon: FormsIcon, off: true },
  { name: "Reports\nScheduler", icon: SchedulerIcon, off: true },
  { name: "Interfaces", icon: InterfacesIcon },
  { name: "Show\nQuick Keys", icon: QuickKeysIcon },
  { name: "Change\nPassword", icon: PasswordIcon },
  { name: "Data\nExtraction", icon: MailReportIcon, off: true },
  { name: "Track It", icon: TrackItIcon },
  { name: "Promotions", icon: PromotionsIcon },
  { name: "Print Tasks", icon: PrintTasksIcon, off: true },
  { name: "User\nActivity Log", icon: ActivityLogIcon },
  { name: "Memberships", icon: MembershipsIcon },
  { name: "File Export", icon: FileExportIcon },
  { name: "File Download", icon: FileDownloadIcon, off: true },
];

const results = [["15.023c HSK Traces INH / Arrivals / Due Out", "gitraces"], ...Array(11).fill(["", ""])];

function ReportsDialog() {
  return (
    <Dialog aria-label="Reports">
      <TitleBar $active>
        <AppMark />
        <TitleText>425 - Reports</TitleText>
      </TitleBar>
      <DialogBody onSubmit={(e) => e.preventDefault()}>
        <Criteria>
          <Row $h={25}>
            <Label $w={88} htmlFor="report">Report</Label>
            <TextBox id="report" $w={165} $cream defaultValue="15.023c" />
            <Label $w={62} htmlFor="property">Property</Label>
            <Lookup $w={111}>
              <TextBox id="property" $cream defaultValue="425" />
              <LookupButton type="button" aria-label="Choose property">
                <ListArrow />
              </LookupButton>
            </Lookup>
            <Command type="submit">
              Searc<u>h</u>
            </Command>
          </Row>
          <Row $h={14}>
            <Label as="span" $w={88}>Application</Label>
            <Check $w={83} on>
              P<u>M</u>S
            </Check>
            <Check on>S&amp;C</Check>
          </Row>
          <Row $h={20}>
            <Label $w={88} htmlFor="group">Report Group</Label>
            <Combo $w={349} $h={20} $cream>
              <ComboSelect id="group" $inset={5}>
                <option>All Reports</option>
              </ComboSelect>
              <ComboArrow>
                <Caret />
              </ComboArrow>
            </Combo>
          </Row>
        </Criteria>

        <Indented>
          <Results>
            <Grid>
              <colgroup>
                <NameColumn />
                <col />
              </colgroup>
              <thead>
                <tr>
                  <th scope="col">Report Name</th>
                  <th scope="col">REP Name</th>
                </tr>
              </thead>
              <tbody>
                {results.map(([name, rep], i) => (
                  <ResultRow key={i} $selected={i === 0}>
                    <td>{name}</td>
                    <td>{rep}</td>
                  </ResultRow>
                ))}
              </tbody>
            </Grid>
            <ScrollBar>
              <ScrollButton type="button" aria-label="Scroll up">
                <Caret up />
              </ScrollButton>
              <ScrollTrack />
              <ScrollButton type="button" aria-label="Scroll down" $down>
                <Caret />
              </ScrollButton>
            </ScrollBar>
          </Results>

          <Output>
            <Between>
              <Check>
                <u>F</u>ax / E-mail
              </Check>
              <Row $h={19}>
                <Label htmlFor="format">File Format</Label>
                <Combo $w={126} $h={19}>
                  <ComboSelect id="format" $inset={1}>
                    <option>PDF</option>
                  </ComboSelect>
                  <ComboArrow>
                    <Caret />
                  </ComboArrow>
                </Combo>
              </Row>
            </Between>
            <Row $h={18}>
              <Label $w={101} htmlFor="copies">Copies</Label>
              <TextBox id="copies" $w={23} defaultValue="1" />
            </Row>
            <Row $h={18}>
              <Label $w={101} htmlFor="printer">Current Printer</Label>
              <Lookup>
                <TextBox id="printer" defaultValue={"\\\\SVV000PRDPRT001\\425PR0007"} />
                <LookupButton type="button" aria-label="Choose printer">
                  <ListArrow />
                </LookupButton>
              </Lookup>
            </Row>
          </Output>

          <Commands>
            <Command type="button">
              His<u>t</u>ory
            </Command>
            <Filler />
            <Command type="button">
              <u>O</u>K
            </Command>
            <Command type="button">
              <u>C</u>lose
            </Command>
          </Commands>
        </Indented>
      </DialogBody>
    </Dialog>
  );
}

export default function App() {
  return (
    <Screen>
      <GlobalStyle />
      <MenuBar>
        <MenuItem type="button">
          <u>W</u>indow
        </MenuItem>
      </MenuBar>
      <Frame>
        <FrameInner>
          <TitleBar>
            <AppMark />
            <TitleText>P425-AELSHAFIE</TitleText>
            <RestoreButton type="button" aria-label="Restore">
              <Glyph $w={8} $h={9} viewBox="0 0 8 9" shapeRendering="crispEdges">
                <Px c="#000" r="2,0,6,2 2,0,1,4 7,0,1,6 5,5,3,1 0,3,6,2 0,3,1,6 5,3,1,6 0,8,6,1" />
              </Glyph>
            </RestoreButton>
          </TitleBar>
          <ToolBar>
            <Pager type="button" aria-label="Previous modules">
              <Glyph $w={10} $h={50} viewBox="0 0 10 50">
                <path fill="#868686" d="M10 0v50L0 25z" />
              </Glyph>
            </Pager>
            {tools.map(({ name, icon: ToolIcon, selected }) => (
              <Tool key={name} type="button" $selected={selected}>
                <ToolIcon />
                {name}
              </Tool>
            ))}
            <Pager type="button" aria-label="More modules">
              <Glyph $w={10} $h={50} viewBox="0 0 10 50">
                <path fill="#0000c8" d="M0 0v50l10-25z" />
              </Glyph>
            </Pager>
            <BlankTile $cut />
            <BlankTile />
          </ToolBar>
          <Workspace>
            <SideBar>
              <Pager type="button" $side aria-label="Scroll menu up">
                <Glyph $w={78} $h={10} viewBox="0 0 78 10">
                  <path fill="#868686" d="M0 10h78L39 0z" />
                </Glyph>
              </Pager>
              {sideItems.map(({ name, icon: ItemIcon, off }) => (
                <SideItem key={name} type="button" disabled={off}>
                  <ItemIcon />
                  <SideLabel>{name}</SideLabel>
                </SideItem>
              ))}
              <Pager type="button" $side aria-label="Scroll menu down">
                <Glyph $w={80} $h={10} viewBox="0 0 80 10">
                  <path fill="#0000c8" d="M0 0h80L40 10z" />
                </Glyph>
              </Pager>
            </SideBar>
            <Desktop>
              <Splash>
                <BrandRow>
                  <BrandMark />
                  <Registered>®</Registered>
                </BrandRow>
                <Rule />
                <Division>HOSPITALITY</Division>
                <Offer>Cloud Service</Offer>
              </Splash>
              <ReportsDialog />
            </Desktop>
          </Workspace>
        </FrameInner>
      </Frame>
    </Screen>
  );
}
